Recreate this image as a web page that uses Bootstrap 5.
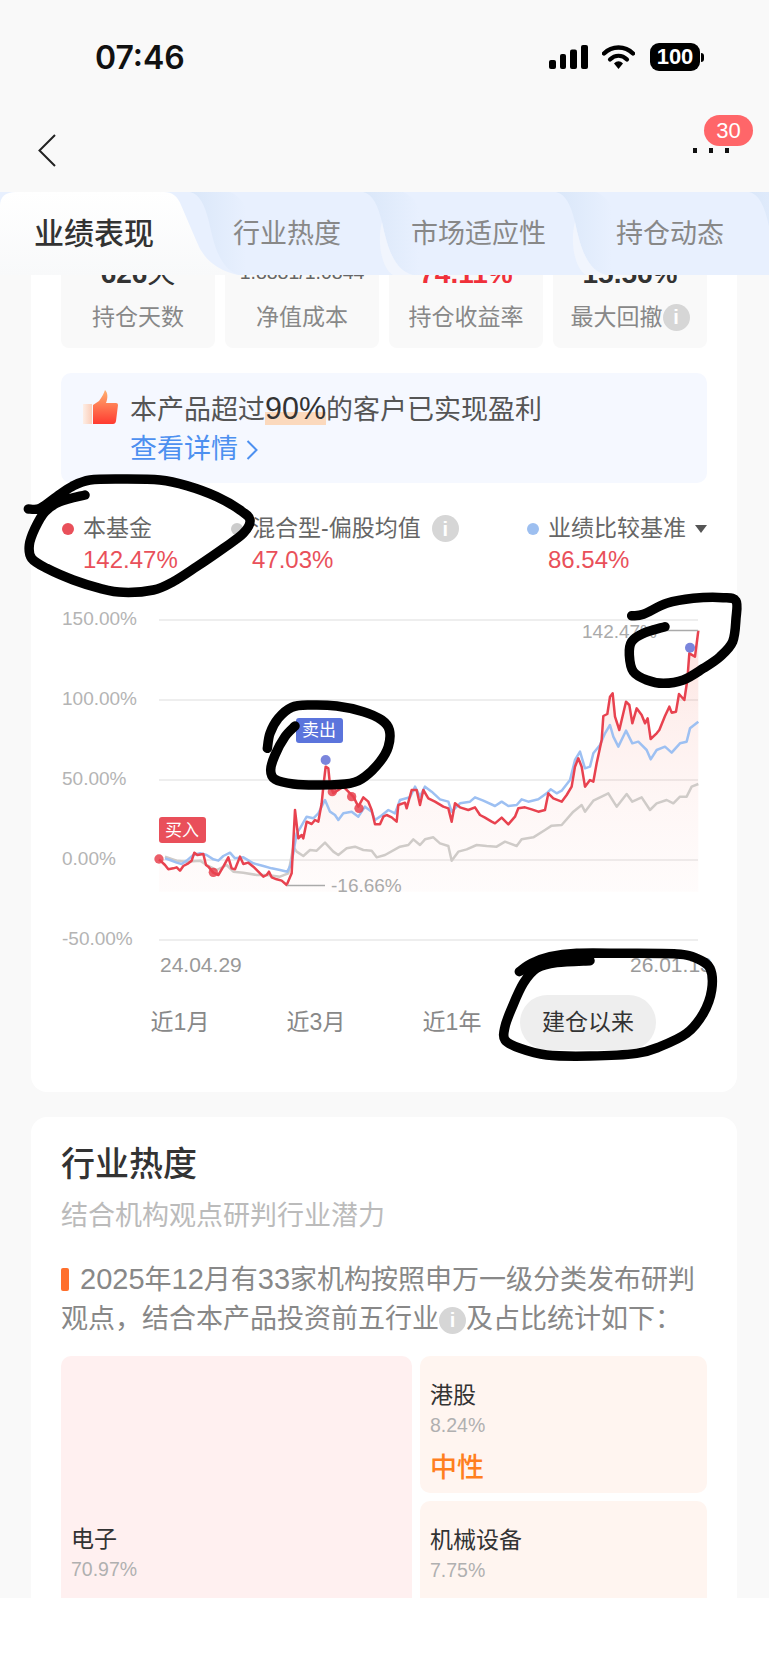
<!DOCTYPE html>
<html lang="zh-CN">

<head>
    <meta charset="UTF-8">
    <meta name="viewport" content="width=device-width, initial-scale=1.0">
    <title>业绩表现</title>
    <link href="https://cdn.jsdelivr.net/npm/bootstrap@5.3.0/dist/css/bootstrap.min.css" rel="stylesheet">
    <style>
        body {
            font-family: "Liberation Sans", "Noto Sans CJK SC", sans-serif;
            background: #fff;
            color: #333;
        }

        .phone-page {
            width: 769px;
            height: 1665px;
            overflow: hidden;
        }

        /* Status bar + nav */
        .top-zone {
            height: 192px;
            background: #f9f9f9;
        }

        .status-row {
            height: 114px;
            padding: 0 65px 0 95px;
        }

        .status-time {
            font-family: Inter, "Liberation Sans", sans-serif;
            font-weight: 600;
            font-size: 32px;
            line-height: 1;
            color: #111;
            padding-top: 2px;
        }

        .batt-box {
            width: 50px;
            height: 28px;
            border-radius: 9px;
            background: #000;
            color: #fff;
            font-weight: 700;
            font-size: 22px;
            line-height: 28px;
            text-align: center;
        }

        .batt-nub {
            width: 3px;
            height: 9px;
            margin-left: 1px;
            background: #000;
            border-radius: 0 3px 3px 0;
        }

        .nav-row {
            height: 72px;
            padding: 0 40px 0 38px;
        }

        .more-dots {
            width: 36px;
            height: 5px;
        }

        .more-dots i {
            width: 4px;
            height: 5px;
            background: #111;
            display: block;
        }

        .msg-count {
            top: -33px;
            left: 11px;
            width: 49px;
            height: 31px;
            border-radius: 16px;
            background: #ff6669;
            color: #fff;
            font-size: 22px;
            line-height: 31px;
            text-align: center;
        }

        /* Tabs */
        .tab-strip {
            height: 83px;
            background: #e8f0fe;
        }

        .tab-art {
            top: 0;
            left: 0;
        }

        .tab-item {
            top: 24px;
            font-size: 27px;
            line-height: 36px;
            color: #888;
            white-space: nowrap;
        }

        .tab-item.on {
            font-size: 30px;
            font-weight: 500;
            color: #333;
        }

        /* Scrolled content */
        .scroll-zone {
            height: 1323px;
            overflow: hidden;
            background: #f9f9f9;
            padding: 0 32px 0 31px;
        }

        .scroll-inner {
            margin-top: -30px;
        }

        .white-block {
            background: #fff;
            padding: 0 30px;
        }

        .block-one {
            border-radius: 0 0 16px 16px;
            padding-bottom: 42px;
        }

        .block-two {
            margin-top: 25px;
            border-radius: 16px 16px 0 0;
            padding-top: 27px;
        }

        .stat-row {
            display: grid;
            grid-template-columns: repeat(4, 154px);
            gap: 10px;
        }

        .stat-box {
            height: 103px;
            background: #f9f9f9;
            border-radius: 0 0 8px 8px;
            text-align: center;
            padding-top: 10px;
        }

        .stat-val {
            height: 38px;
            font-size: 28px;
            line-height: 38px;
            font-weight: 700;
            color: #333;
            white-space: nowrap;
        }

        .stat-val.thin {
            font-size: 19.5px;
            font-weight: 400;
            color: #666;
            line-height: 34px;
        }

        .stat-val.up {
            color: #f0303a;
        }

        .stat-val small {
            font-size: 28px;
            font-weight: 400;
        }

        .stat-name {
            margin-top: 8px;
            font-size: 23px;
            line-height: 32px;
            color: #888;
            white-space: nowrap;
        }

        .info-dot {
            display: inline-flex;
            align-items: center;
            justify-content: center;
            width: 27px;
            height: 27px;
            border-radius: 50%;
            background: #d6d6d6;
            color: #fff;
            font-size: 20px;
            font-weight: 700;
            line-height: 1;
            flex-shrink: 0;
            vertical-align: 1px;
        }

        .hint-box {
            height: 110px;
            margin-top: 25px;
            background: #f5f8ff;
            border-radius: 10px;
            padding: 18px 0 0 22px;
        }

        .hint-icon {
            margin-top: -1px;
            margin-right: 11px;
        }

        .hint-text {
            font-size: 27px;
            line-height: 39px;
            color: #555;
        }

        .hint-pct {
            color: #333;
            font-size: 30.5px;
            line-height: 30px;
            background: linear-gradient(transparent 62%, #fbd9bd 62%);
        }

        .hint-link {
            color: #4d90f0;
        }

        .legend-row {
            display: grid;
            grid-template-columns: 171px 296px 1fr;
            margin-top: 30px;
            margin-left: -1px;
        }

        .legend-first {
            padding-left: 2px;
        }

        .legend-name {
            height: 31px;
            font-size: 23px;
            line-height: 31px;
            color: #666;
            white-space: nowrap;
        }

        .legend-info {
            margin-left: 11px;
        }

        .legend-pct {
            padding-left: 21px;
            font-size: 24px;
            line-height: 31px;
            color: #e9505a;
        }

        .legend-dot {
            display: inline-block;
            width: 12px;
            height: 12px;
            border-radius: 50%;
            margin-right: 9px;
        }

        .legend-caret {
            display: inline-block;
            margin-left: 9px;
            border-left: 6px solid transparent;
            border-right: 6px solid transparent;
            border-top: 8px solid #555;
        }

        .chart-art {
            display: block;
            margin: 15px -30px 0;
        }

        .axis-txt {
            font-size: 19px;
            fill: #b4b4b4;
        }

        .date-txt {
            font-size: 21px;
            fill: #999;
        }

        .flag-txt {
            font-size: 17px;
            fill: #fff;
        }

        .range-row {
            margin-top: 10px;
        }

        .range-btn {
            width: 136px;
            height: 55px;
            border: 0;
            border-radius: 28px;
            background: transparent;
            padding: 0;
            font-size: 23px;
            color: #888;
        }

        .range-btn.on {
            background: #eee;
            color: #333;
        }

        .sect-title {
            font-size: 34px;
            line-height: 40px;
            font-weight: 500;
            color: #333;
        }

        .sect-sub {
            margin-top: 12px;
            font-size: 27px;
            line-height: 40px;
            color: #bbb;
        }

        .sect-para {
            margin-top: 25px;
            font-size: 27px;
            line-height: 39px;
            color: #888;
        }

        .para-num {
            font-size: 29px;
            line-height: 30px;
        }

        .para-mark {
            display: inline-block;
            width: 8px;
            height: 23px;
            margin-right: 11px;
            border-radius: 2px;
            background: #ff6f2c;
            vertical-align: -2px;
        }

        .heat-grid {
            display: grid;
            grid-template-columns: 351px 287px;
            grid-template-rows: repeat(3, 137px);
            gap: 8px;
            margin-top: 17px;
        }

        .heat-cell {
            border-radius: 10px;
            padding: 23.5px 10px 0;
            background: #fff5f0;
        }

        .heat-cell.big {
            grid-row: span 3;
            padding-top: 167.5px;
            background: #fff0f0;
        }

        .heat-name {
            font-size: 23px;
            line-height: 31px;
            color: #333;
        }

        .heat-pct {
            font-size: 19.5px;
            line-height: 29px;
            color: #b0b0b0;
        }

        .heat-tag {
            margin-top: 8.5px;
            font-size: 27px;
            line-height: 40px;
            font-weight: 500;
            color: #ff7f1e;
        }

        .heat-tag.hot {
            color: #f0303a;
        }

        .bottom-gap {
            height: 67px;
            background: #fff;
        }

        /* Hand-drawn marks over the screenshot */
        .ink-layer {
            top: 0;
            left: 0;
            pointer-events: none;
        }
    </style>
</head>

<body>
    <div class="phone-page position-relative">
        <div class="top-zone">
            <div class="status-row d-flex justify-content-between align-items-center">
                <span class="status-time">07:46</span>
                <div class="d-flex align-items-center">
                    <svg width="39" height="24" viewBox="0 0 39 24" style="margin-right:14px">
                        <rect x="0" y="15" width="7" height="9" rx="2" />
                        <rect x="11" y="9" width="6" height="15" rx="2" />
                        <rect x="21" y="4.5" width="7" height="19.5" rx="2" />
                        <rect x="32" y="0" width="7" height="24" rx="2" />
                    </svg>
                    <svg width="33" height="24" viewBox="0 0 33 24" style="margin-right:15px">
                        <path d="M2 8.5C10 0.5 23 0.5 31 8.5" fill="none" stroke="#000" stroke-width="4.4" stroke-linecap="round" />
                        <path d="M8 14.5C13 9.5 20 9.5 25 14.5" fill="none" stroke="#000" stroke-width="4.2" stroke-linecap="round" />
                        <path d="M12 18.6C15 15.6 18 15.6 21 18.6L16.5 24Z" />
                    </svg>
                    <div class="batt-box">100</div>
                    <div class="batt-nub"></div>
                </div>
            </div>
            <div class="nav-row d-flex justify-content-between align-items-center">
                <svg width="18" height="33" viewBox="0 0 18 33">
                    <path d="M17 1L1.5 16.5L17 32" fill="none" stroke="#222" stroke-width="2" />
                </svg>
                <div class="more-dots position-relative d-flex justify-content-between">
                    <i></i><i></i><i></i>
                    <span class="msg-count position-absolute">30</span>
                </div>
            </div>
        </div>

        <div class="tab-strip position-relative">
            <svg class="tab-art position-absolute" width="769" height="83" viewBox="0 192 769 83">
                <defs>
                    <linearGradient id="tabShade" x1="0" y1="0" x2="1" y2="0">
                        <stop offset="0" stop-color="#dae7f9" />
                        <stop offset=".8" stop-color="#e8f0fe" />
                    </linearGradient>
                    <linearGradient id="tabOn" x1="0" y1="0" x2="0" y2="1">
                        <stop offset="0" stop-color="#fff" />
                        <stop offset="1" stop-color="#f8f9fa" />
                    </linearGradient>
                    <path id="tabEdge" d="M0 192C10 194 15 206 19 222C24 245 30 270 50 275H70C60 250 70 205 40 192Z" fill="url(#tabShade)" />
                    <path id="tabFoot" d="M19 222C24 245 30 270 50 275H30C18 268 14 240 19 222Z" fill="#f1f5fd" />
                </defs>
                <use href="#tabEdge" x="363" />
                <use href="#tabFoot" x="363" />
                <use href="#tabEdge" x="556" />
                <use href="#tabFoot" x="556" />
                <use href="#tabEdge" x="749" />
                <use href="#tabEdge" x="190" />
                <path d="M0 275V206Q0 192 16 192H164Q176 192 181 205L196 240Q206 268 238 275Z" fill="url(#tabOn)" />
            </svg>
            <span class="tab-item on position-absolute" style="left:34px">业绩表现</span>
            <span class="tab-item position-absolute" style="left:233px">行业热度</span>
            <span class="tab-item position-absolute" style="left:411px">市场适应性</span>
            <span class="tab-item position-absolute" style="left:616px">持仓动态</span>
        </div>

        <div class="scroll-zone">
            <div class="scroll-inner">
                <div class="white-block block-one">
                    <div class="stat-row">
                        <div class="stat-box">
                            <div class="stat-val">626<small>天</small></div>
                            <div class="stat-name">持仓天数</div>
                        </div>
                        <div class="stat-box">
                            <div class="stat-val thin">1.8881/1.0844</div>
                            <div class="stat-name">净值成本</div>
                        </div>
                        <div class="stat-box">
                            <div class="stat-val up">74.11%</div>
                            <div class="stat-name">持仓收益率</div>
                        </div>
                        <div class="stat-box">
                            <div class="stat-val">15.56%</div>
                            <div class="stat-name d-flex justify-content-center align-items-center">最大回撤<span class="info-dot">i</span></div>
                        </div>
                    </div>

                    <div class="hint-box d-flex">
                        <svg width="36" height="35" viewBox="83 390 36 35" class="hint-icon flex-shrink-0">
                            <defs>
                                <linearGradient id="thumbFill" x1="0" y1="0" x2="0" y2="1">
                                    <stop offset="0" stop-color="#ffb070" />
                                    <stop offset="1" stop-color="#ff3a30" />
                                </linearGradient>
                                <linearGradient id="thumbPalm" x1="0" y1="0" x2="1" y2="0">
                                    <stop offset="0" stop-color="#fdeee6" />
                                    <stop offset="1" stop-color="#fbcdb8" />
                                </linearGradient>
                            </defs>
                            <rect x="83" y="404" width="9" height="20" fill="url(#thumbPalm)" />
                            <path d="M93 405L99 401C102 397 104 393 105 390C108 393 108 398 106 403H116Q118 403 118 405L116 421Q115.5 424 113 424H93Z" fill="url(#thumbFill)" />
                        </svg>
                        <div class="hint-text">
                            <div>本产品超过<span class="hint-pct">90%</span>的客户已实现盈利</div>
                            <div class="hint-link d-flex align-items-center">查看详情
                                <svg width="12" height="22" viewBox="0 0 12 22" class="ms-2">
                                    <path d="M1.5 2L10.5 11L1.5 20" fill="none" stroke="#4d90f0" stroke-width="2" />
                                </svg>
                            </div>
                        </div>
                    </div>

                    <div class="legend-row">
                        <div class="legend-first">
                            <div class="legend-name d-flex align-items-center"><span class="legend-dot" style="background:#e9505a"></span>本基金</div>
                            <div class="legend-pct">142.47%</div>
                        </div>
                        <div>
                            <div class="legend-name d-flex align-items-center"><span class="legend-dot" style="background:#ccc"></span>混合型-偏股均值<span class="info-dot legend-info">i</span></div>
                            <div class="legend-pct">47.03%</div>
                        </div>
                        <div>
                            <div class="legend-name d-flex align-items-center"><span class="legend-dot" style="background:#9dbff0"></span>业绩比较基准<span class="legend-caret"></span></div>
                            <div class="legend-pct">86.54%</div>
                        </div>
                    </div>

                    <svg class="chart-art" id="chart" width="706" height="395" viewBox="31 590 706 395">
                        <defs>
                            <!-- y runs in the plot group's 3x space -->
                            <linearGradient id="areaFill" gradientUnits="userSpaceOnUse" x1="0" y1="90" x2="0" y2="905">
                                <stop offset="0" stop-color="#f2624f" stop-opacity=".2" />
                                <stop offset=".35" stop-color="#f2624f" stop-opacity=".1" />
                                <stop offset=".7" stop-color="#f2624f" stop-opacity=".05" />
                                <stop offset="1" stop-color="#f2624f" stop-opacity=".02" />
                            </linearGradient>
                        </defs>
                        <g stroke="#e8e8e8" stroke-width="1.5">
                            <line x1="159" y1="620" x2="698" y2="620" />
                            <line x1="159" y1="700" x2="698" y2="700" />
                            <line x1="159" y1="780" x2="698" y2="780" />
                            <line x1="159" y1="860" x2="698" y2="860" />
                            <line x1="159" y1="940" x2="698" y2="940" />
                        </g>
                        <text class="axis-txt" x="62" y="625">150.00%</text>
                        <text class="axis-txt" x="62" y="705">100.00%</text>
                        <text class="axis-txt" x="62" y="785">50.00%</text>
                        <text class="axis-txt" x="62" y="865">0.00%</text>
                        <text class="axis-txt" x="62" y="945">-50.00%</text>
                        <text class="date-txt" x="160" y="972">24.04.29</text>
                        <text class="date-txt" x="630" y="972">26.01.13</text>
                        <g id="plot" transform="translate(0 590) scale(.33333)" fill="none" stroke-width="7.5" stroke-linejoin="round"></g>
                        <line x1="287" y1="885.5" x2="325" y2="885.5" stroke="#aaa" stroke-width="1.5" />
                        <text class="axis-txt" x="331" y="892" style="fill:#aaa">-16.66%</text>
                        <line x1="660" y1="630.5" x2="698" y2="630.5" stroke="#aaa" stroke-width="1.5" />
                        <text class="axis-txt" x="582" y="638" style="fill:#aaa">142.47%</text>
                        <rect x="159" y="817" width="47" height="26" rx="3" fill="#e94f5a" />
                        <text class="flag-txt" x="165" y="836">买入</text>
                        <rect x="296" y="718" width="47" height="25" rx="3" fill="#5b74dc" />
                        <text class="flag-txt" x="302" y="736">卖出</text>
                    </svg>

                    <div class="range-row d-flex justify-content-center">
                        <button class="range-btn">近1月</button>
                        <button class="range-btn">近3月</button>
                        <button class="range-btn">近1年</button>
                        <button class="range-btn on">建仓以来</button>
                    </div>
                </div>

                <div class="white-block block-two">
                    <div class="sect-title">行业热度</div>
                    <div class="sect-sub">结合机构观点研判行业潜力</div>
                    <div class="sect-para"><span class="para-mark"></span><span class="para-num">2025</span>年<span class="para-num">12</span>月有<span class="para-num">33</span>家机构按照申万一级分类发布研判观点，结合本产品投资前五行业<span class="info-dot">i</span>及占比统计如下：</div>
                    <div class="heat-grid">
                        <div class="heat-cell big">
                            <div class="heat-name">电子</div>
                            <div class="heat-pct">70.97%</div>
                            <div class="heat-tag hot">乐观</div>
                        </div>
                        <div class="heat-cell">
                            <div class="heat-name">港股</div>
                            <div class="heat-pct">8.24%</div>
                            <div class="heat-tag">中性</div>
                        </div>
                        <div class="heat-cell">
                            <div class="heat-name">机械设备</div>
                            <div class="heat-pct">7.75%</div>
                            <div class="heat-tag">中性</div>
                        </div>
                    </div>
                </div>
            </div>
        </div>
        <div class="bottom-gap"></div>

        <svg class="ink-layer position-absolute" id="ink" width="769" height="1665" viewBox="0 0 769 1665" fill="none" stroke="#000" stroke-width="9.5" stroke-linecap="round" stroke-linejoin="round"></svg>
    </div>

    <script src="https://cdn.jsdelivr.net/npm/bootstrap@5.3.0/dist/js/bootstrap.bundle.min.js"></script>
    <script>
        // Series are traced at 3x: first list is x < 380, second list starts at x = 380
        const join = (a, b) => a.concat(b.map(([x, y]) => [x + 1140, y]));

        const red = join(
            [[477,808],[495,825],[505,838],[520,835],[530,832],[540,842],[550,828],[565,820],[575,812],[583,788],[592,795],[610,792],[618,825],[625,830],[640,848],[655,855],[670,830],[685,802],[695,835],[705,838],[720,800],[730,822],[745,818],[760,830],[775,845],[790,860],[800,855],[807,845],[815,862],[830,868],[845,872],[860,885],[875,850],[885,660],[895,745],[905,735],[910,745],[920,695],[935,702],[945,690],[955,695],[965,640],[970,590],[977,530],[985,535],[990,585],[1000,610],[1015,600],[1030,590],[1045,605],[1060,620],[1075,650],[1090,622],[1105,635],[1115,660],[1125,703]],
            [[0,703],[10,680],[20,675],[35,682],[50,695],[55,645],[75,638],[80,655],[95,600],[110,600],[120,645],[130,600],[145,625],[165,635],[190,650],[205,655],[215,695],[225,640],[240,652],[265,660],[285,652],[300,675],[315,683],[335,695],[345,700],[365,683],[385,703],[405,680],[415,655],[435,652],[455,658],[475,665],[495,660],[505,610],[520,625],[545,635],[560,615],[575,590],[585,530],[595,505],[605,530],[615,590],[630,570],[640,575],[650,520],[665,450],[670,378],[682,372],[690,320],[698,310],[705,380],[718,420],[738,335],[748,345],[757,400],[770,355],[785,375],[795,400],[803,385],[812,447],[830,430],[838,420],[855,378],[868,350],[875,368],[888,365],[897,312],[913,330],[922,270],[928,190],[945,200],[955,122]]
        );
        const blue = join(
            [[495,805],[510,810],[530,818],[545,822],[560,812],[580,795],[600,790],[620,795],[640,808],[655,812],[670,798],[690,788],[705,805],[730,802],[760,820],[790,828],[815,835],[840,840],[862,845],[872,825],[880,790],[890,730],[900,715],[920,680],[940,685],[955,670],[975,630],[990,665],[1005,675],[1015,690],[1030,670],[1055,665],[1075,680],[1095,650],[1115,665],[1125,690]],
            [[0,680],[25,660],[45,670],[60,630],[90,622],[105,590],[120,620],[135,590],[155,605],[180,628],[205,635],[215,665],[240,640],[270,635],[285,622],[310,632],[345,648],[365,635],[385,648],[410,645],[425,628],[445,635],[475,628],[500,610],[512,598],[530,610],[545,602],[570,570],[585,510],[600,485],[615,535],[630,530],[640,490],[660,465],[675,430],[690,405],[700,440],[715,470],[738,422],[757,460],[775,455],[800,480],[812,508],[830,480],[855,470],[875,488],[900,460],[920,455],[930,415],[955,395]]
        );
        const gray = join(
            [[495,800],[530,812],[560,815],[600,812],[620,825],[650,840],[680,825],[700,845],[730,848],[770,855],[800,855],[840,860],[865,850],[880,770],[890,785],[910,798],[930,780],[950,782],[975,758],[1000,785],[1015,795],[1040,775],[1065,770],[1090,780],[1115,782],[1130,802]],
            [[15,795],[60,770],[85,765],[100,748],[120,765],[135,748],[160,742],[180,760],[205,768],[215,812],[235,785],[260,778],[290,765],[320,768],[350,770],[375,755],[410,768],[425,748],[460,742],[495,720],[515,707],[545,705],[580,665],[605,645],[615,665],[640,632],[685,610],[710,650],[740,612],[757,635],[785,622],[810,660],[830,640],[860,630],[880,640],[900,620],[920,620],[935,590],[955,582]]
        );

        const svgNs = 'http://www.w3.org/2000/svg';
        const addTo = (parent, tag, attrs) => {
            const el = document.createElementNS(svgNs, tag);
            Object.entries(attrs).forEach(([k, v]) => el.setAttribute(k, v));
            parent.appendChild(el);
        };

        const plot = document.getElementById('plot');
        const pts = (list) => list.map((p) => p.join(',')).join(' ');
        const last = red[red.length - 1];
        addTo(plot, 'polygon', { points: `477,905 ${pts(red)} ${last[0]},905`, fill: 'url(#areaFill)', stroke: 'none' });
        addTo(plot, 'polyline', { points: pts(gray), stroke: '#cfcbc8' });
        addTo(plot, 'polyline', { points: pts(blue), stroke: '#9dc0f2' });
        addTo(plot, 'polyline', { points: pts(red), stroke: '#e8424f' });
        [[477,807],[640,847],[997,605],[1055,620],[1077,655]].forEach(([cx, cy]) => {
            addTo(plot, 'circle', { cx, cy, r: 14, fill: '#e8424f', 'fill-opacity': '.85', stroke: 'none' });
        });
        [[977,510],[2070,173]].forEach(([cx, cy]) => {
            addTo(plot, 'circle', { cx, cy, r: 15, fill: '#6b78d8', 'fill-opacity': '.9', stroke: 'none' });
        });

        // Pen marks, traced at 3x from each mark's own corner
        const smooth = (list, ox, oy) => {
            const p = list.map(([x, y]) => [ox + x / 3, oy + y / 3]);
            let d = `M${p[0][0]} ${p[0][1]}`;
            for (let i = 0; i < p.length - 1; i++) {
                const a = p[Math.max(i - 1, 0)], b = p[i], c = p[i + 1], e = p[Math.min(i + 2, p.length - 1)];
                d += `C${b[0] + (c[0] - a[0]) / 6} ${b[1] + (c[1] - a[1]) / 6} ${c[0] - (e[0] - b[0]) / 6} ${c[1] - (e[1] - b[1]) / 6} ${c[0]} ${c[1]}`;
            }
            return d;
        };
        const ink = document.getElementById('ink');
        addTo(ink, 'path', { d: smooth([[55,132],[90,130],[140,95],[185,65],[240,45],[340,42],[450,45],[530,62],[620,95],[690,135],[720,165],[700,205],[640,250],[560,305],[490,350],[430,375],[340,382],[270,370],[190,345],[110,310],[65,280],[58,240],[75,190],[105,140],[150,110],[225,90]], 10, 465) });
        addTo(ink, 'path', { d: smooth([[52,175],[60,130],[85,85],[125,52],[180,45],[260,48],[340,65],[395,90],[418,120],[415,170],[390,215],[345,260],[300,280],[210,285],[130,282],[75,268],[62,240],[75,195],[105,140],[135,108]], 250, 690) });
        addTo(ink, 'path', { d: smooth([[65,92],[100,88],[170,55],[250,40],[340,38],[378,48],[378,100],[368,170],[330,215],[280,250],[220,285],[160,295],[110,285],[70,260],[58,210],[65,170],[100,145],[165,125]], 610, 585) });
        addTo(ink, 'path', { d: smooth([[88,95],[125,70],[180,50],[260,40],[400,40],[560,42],[620,55],[660,85],[665,150],[640,220],[590,280],[510,320],[440,340],[300,348],[170,345],[90,325],[45,300],[45,260],[65,205],[100,130],[140,85],[200,68],[300,62]], 490, 940) });
    </script>
</body>

</html>
